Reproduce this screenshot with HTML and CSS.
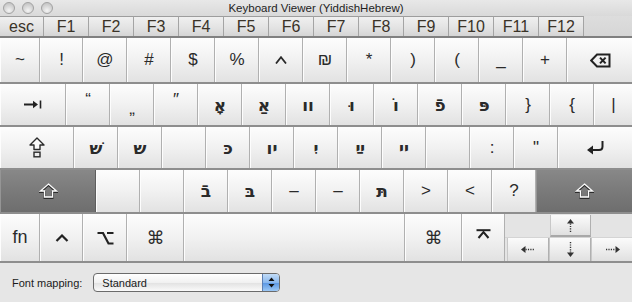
FILE: index.html
```html
<!DOCTYPE html>
<html lang="en">
<head>
    <meta charset="UTF-8">
    <title>Keyboard Viewer</title>
    <link rel="stylesheet" href="styles.css">
</head>
<body>
<div class="window">

    <!-- title bar -->
    <div class="titlebar">
        <div class="lights"><span></span><span></span><span></span></div>
        <div class="title">Keyboard Viewer (YiddishHebrew)</div>
        <div></div>
    </div>

    <!-- function keys -->
    <div class="frow">
        <div class="fkey esc">esc</div>
        <div class="fkey">F1</div>
        <div class="fkey">F2</div>
        <div class="fkey">F3</div>
        <div class="fkey">F4</div>
        <div class="fkey">F5</div>
        <div class="fkey">F6</div>
        <div class="fkey">F7</div>
        <div class="fkey">F8</div>
        <div class="fkey">F9</div>
        <div class="fkey">F10</div>
        <div class="fkey">F11</div>
        <div class="fkey">F12</div>
    </div>

    <!-- number row -->
    <div class="row r-num">
        <div class="key w40">~</div>
        <div class="key w43">!</div>
        <div class="key">@</div>
        <div class="key">#</div>
        <div class="key">$</div>
        <div class="key">%</div>
        <div class="key">
            <svg width="12" height="8" viewBox="0 0 12 8"><path d="M1 7.5 L6 1.2 L11 7.5" fill="none" stroke="#2a2a2a" stroke-width="1.8"/></svg>
        </div>
        <div class="key">₪</div>
        <div class="key">*</div>
        <div class="key">)</div>
        <div class="key">(</div>
        <div class="key">_</div>
        <div class="key">+</div>
        <div class="key last">
            <svg width="21" height="15" viewBox="0 0 21 15"><path d="M1.2 7.5 L7 1.5 H19.5 V13.5 H7 Z" fill="none" stroke="#222" stroke-width="2"/><path d="M10 4.6 L15.6 10.4 M15.6 4.6 L10 10.4" stroke="#222" stroke-width="2"/></svg>
        </div>
    </div>

    <!-- tab row -->
    <div class="row r-tab">
        <div class="key w66">
            <svg width="18" height="9" viewBox="0 0 18 9"><path d="M0 4.5 H10" stroke="#222" stroke-width="2"/><path d="M9 0.8 L14 4.5 L9 8.2 Z" fill="#222"/><path d="M16.5 0.5 V8.5" stroke="#222" stroke-width="1.6"/></svg>
        </div>
        <div class="key top">“</div>
        <div class="key bottom">„</div>
        <div class="key top">″</div>
        <div class="key he">אָ</div>
        <div class="key he">אַ</div>
        <div class="key he">וו</div>
        <div class="key he">וּ</div>
        <div class="key he">וֹ</div>
        <div class="key he">פֿ</div>
        <div class="key he">פּ</div>
        <div class="key">}</div>
        <div class="key">{</div>
        <div class="key last">|</div>
    </div>

    <!-- caps row -->
    <div class="row r-caps">
        <div class="key w74">
            <svg width="16" height="21" viewBox="0 0 16 21"><path d="M8 1 L15 8 H11 V12.5 H5 V8 H1 Z" fill="#fafafa" stroke="#2a2a2a" stroke-width="1.4" stroke-linejoin="round"/><rect x="5" y="15.2" width="6" height="4.6" fill="none" stroke="#2a2a2a" stroke-width="1.4"/></svg>
        </div>
        <div class="key he">שׁ</div>
        <div class="key he">ש</div>
        <div class="key"></div>
        <div class="key he">כּ</div>
        <div class="key he">יו</div>
        <div class="key he">יִ</div>
        <div class="key he">ײַ</div>
        <div class="key he">יי</div>
        <div class="key"></div>
        <div class="key">:</div>
        <div class="key">"</div>
        <div class="key last">
            <svg width="19" height="16" viewBox="0 0 19 16"><path d="M16.5 1 V6.5 Q16.5 10 13 10 H6" fill="none" stroke="#222" stroke-width="2"/><path d="M1 10 L7 5.5 V14.5 Z" fill="#222"/></svg>
        </div>
    </div>

    <!-- shift row -->
    <div class="row r-shift">
        <div class="key w96 dark">
            <svg width="19" height="16" viewBox="0 0 19 16"><path d="M9.5 2 L17.5 9 H13.5 V15 H5.5 V9 H1.5 Z" fill="none" stroke="#2c2c2c" stroke-width="2"/><path d="M9.5 1 L17.5 8 H13.5 V14 H5.5 V8 H1.5 Z" fill="none" stroke="#fff" stroke-width="1.3"/></svg>
        </div>
        <div class="key"></div>
        <div class="key"></div>
        <div class="key he">בֿ</div>
        <div class="key he">בּ</div>
        <div class="key">–</div>
        <div class="key">–</div>
        <div class="key he">תּ</div>
        <div class="key">&gt;</div>
        <div class="key">&lt;</div>
        <div class="key">?</div>
        <div class="key last dark">
            <svg width="19" height="16" viewBox="0 0 19 16"><path d="M9.5 2 L17.5 9 H13.5 V15 H5.5 V9 H1.5 Z" fill="none" stroke="#2c2c2c" stroke-width="2"/><path d="M9.5 1 L17.5 8 H13.5 V14 H5.5 V8 H1.5 Z" fill="none" stroke="#fff" stroke-width="1.3"/></svg>
        </div>
    </div>

    <!-- bottom row -->
    <div class="row r-bottom">
        <div class="key w40 fn">fn</div>
        <div class="key w43">
            <svg width="14" height="8" viewBox="0 0 14 8"><path d="M1.5 7 L7 1.5 L12.5 7" fill="none" stroke="#222" stroke-width="2.2"/></svg>
        </div>
        <div class="key">
            <svg width="17" height="14" viewBox="0 0 17 14"><path d="M0.5 2 H6 L11.5 12.5 H16.5 M10 2 H16.5" fill="none" stroke="#222" stroke-width="2.2"/></svg>
        </div>
        <div class="key w57 cmd">⌘</div>
        <div class="key w221"></div>
        <div class="key w57 cmd">⌘</div>
        <div class="key w43 up">
            <svg width="15" height="10" viewBox="0 0 15 10"><path d="M0.5 1.2 H14.5" stroke="#222" stroke-width="2"/><path d="M2.5 9 L7.5 3 L12.5 9" fill="none" stroke="#222" stroke-width="2"/></svg>
        </div>
        <div class="arrows">
            <div class="arow-top">
                <div class="akey">
                    <svg width="7" height="13" viewBox="0 0 7 13"><path d="M3.5 0 L7 4.5 H0 Z" fill="#333"/><path d="M3.5 4.5 V13" stroke="#333" stroke-width="1.4" stroke-dasharray="1.2 1.2"/></svg>
                </div>
            </div>
            <div class="arow-bottom">
                <div class="akey">
                    <svg width="14" height="7" viewBox="0 0 14 7"><path d="M0 3.5 L4.5 0 V7 Z" fill="#333"/><path d="M4.5 3.5 H14" stroke="#333" stroke-width="1.4" stroke-dasharray="1.2 1.2"/></svg>
                </div>
                <div class="akey">
                    <svg width="7" height="15" viewBox="0 0 7 15"><path d="M3.5 0 V10.5" stroke="#333" stroke-width="1.4" stroke-dasharray="1.2 1.2"/><path d="M0 10.5 H7 L3.5 15 Z" fill="#333"/></svg>
                </div>
                <div class="akey last">
                    <svg width="14" height="7" viewBox="0 0 14 7"><path d="M0 3.5 H9.5" stroke="#333" stroke-width="1.4" stroke-dasharray="1.2 1.2"/><path d="M9.5 0 L14 3.5 L9.5 7 Z" fill="#333"/></svg>
                </div>
            </div>
        </div>
    </div>

    <!-- font mapping popup -->
    <div class="footer">
        <span class="label">Font mapping:</span>
        <div class="popup">
            <span class="value">Standard</span>
            <span class="stepper">
                <svg width="7" height="11" viewBox="0 0 7 11"><path d="M3.5 0.5 L6.5 4 H0.5 Z M0.5 7 H6.5 L3.5 10.5 Z" fill="#111"/></svg>
            </span>
        </div>
    </div>

</div>
</body>
</html>
```

FILE: styles.css
```css
body {
    margin: 0;
    background-color: #e6e6e6;
    font-family: "Liberation Sans", Arial, sans-serif;
    color: #2a2a2a;
}
.window {
    width: 632px;
    height: 302px;
    overflow: hidden;
    background-color: #e6e6e6;
}

/* title bar */
.titlebar {
    height: 16px;
    display: grid;
    grid-template-columns: 1fr auto 1fr;
    align-items: center;
    background: linear-gradient(#e8e8e8, #d9d9d9);
}
.lights {
    display: flex;
    gap: 7px;
    padding-left: 3px;
}
.lights span {
    width: 12px;
    height: 12px;
    box-sizing: border-box;
    border-radius: 50%;
    border: 1px solid #a2a2a2;
    background: radial-gradient(circle at 50% 75%, #f4f4f4, #c8c8c8 75%);
}
.title {
    font-size: 11.5px;
    color: #1e1e1e;
}

/* function row */
.frow {
    display: flex;
    height: 20px;
    border-bottom: 2px solid #808080;
    background: linear-gradient(#dddddd, #d6d6d6);
}
.fkey {
    width: 45px;
    box-sizing: border-box;
    border-top: 1px solid #9d9d9d;
    border-right: 1px solid #a4a4a4;
    background: linear-gradient(#f0f0f0, #e2e2e2 60%, #d5d5d5);
    display: flex;
    align-items: center;
    justify-content: center;
    font-size: 16px;
    color: #3a3328;
}
.fkey.esc {
    width: 44px;
}

/* key rows */
.row {
    display: flex;
    border-bottom: 2px solid #8e8e8e;
}
.r-num { height: 44px; }
.r-tab { height: 41px; }
.r-caps { height: 41px; }
.r-shift { height: 42px; }
.r-bottom { height: 47px; }

.key {
    flex: none;
    width: 44px;
    box-sizing: border-box;
    border-left: 1px solid #fdfdfd;
    border-right: 1px solid #b0b0b0;
    background: linear-gradient(#fdfdfd, #f1f1f1 50%, #e2e2e2);
    display: flex;
    align-items: center;
    justify-content: center;
    font-size: 17px;
    color: #2a2a2a;
}
.key.last {
    flex: 1;
    border-right: none;
}
.w40 { width: 40px; }
.w43 { width: 43px; }
.w57 { width: 57px; }
.w66 { width: 66px; }
.w74 { width: 74px; }
.w96 { width: 96px; }
.w221 { width: 221px; }

.key.dark {
    background: linear-gradient(#888888, #7a7a7a 50%, #6e6e6e);
    border-left-color: #959595;
    border-right-color: #5e5e5e;
}
.key.he {
    font-family: "DejaVu Sans", sans-serif;
    font-size: 17px;
    font-weight: bold;
}
.key.top {
    align-items: flex-start;
    padding-top: 6px;
}
.key.bottom {
    align-items: flex-end;
    padding-bottom: 6px;
}
.key.fn {
    font-size: 18px;
}
.key.cmd {
    font-family: "DejaVu Sans", sans-serif;
    font-size: 18px;
}
.key.up svg {
    margin-bottom: 8px;
}

/* arrow cluster */
.arrows {
    flex: 1;
    display: flex;
    flex-direction: column;
    background-color: #e4e4e4;
}
.arow-top {
    height: 22px;
    padding-top: 1px;
    padding-left: 45px;
    display: flex;
    border-bottom: 1px solid #d4d4d4;
}
.arow-top .akey {
    width: 41px;
    border-bottom: 2px solid #a8a8a8;
}
.arow-bottom {
    flex: 1;
    display: flex;
    padding-left: 2px;
}
.akey {
    width: 42px;
    box-sizing: border-box;
    border-left: 1px solid #c8c8c8;
    border-right: 1px solid #b0b0b0;
    background: linear-gradient(#fbfbfb, #eeeeee 50%, #e0e0e0);
    display: flex;
    align-items: center;
    justify-content: center;
}
.akey.last {
    flex: 1;
    border-right: none;
}

/* footer */
.footer {
    height: 39px;
    display: flex;
    align-items: center;
    padding-left: 12px;
    font-size: 11px;
    color: #1a1a1a;
}
.popup {
    margin-left: 11px;
    width: 187px;
    height: 19px;
    box-sizing: border-box;
    border: 1px solid #6b6b6b;
    border-radius: 4px;
    background: linear-gradient(#ffffff, #f1f1f1 50%, #e3e3e3 55%, #fafafa);
    display: flex;
    align-items: center;
    overflow: hidden;
}
.popup .value {
    flex: 1;
    padding-left: 8px;
}
.stepper {
    width: 16px;
    height: 100%;
    border-left: 1px solid #5c7fb3;
    background: linear-gradient(#c2dcf7, #8ab8ee 50%, #5d99e4 55%, #9cc8f5);
    display: flex;
    align-items: center;
    justify-content: center;
}
```
